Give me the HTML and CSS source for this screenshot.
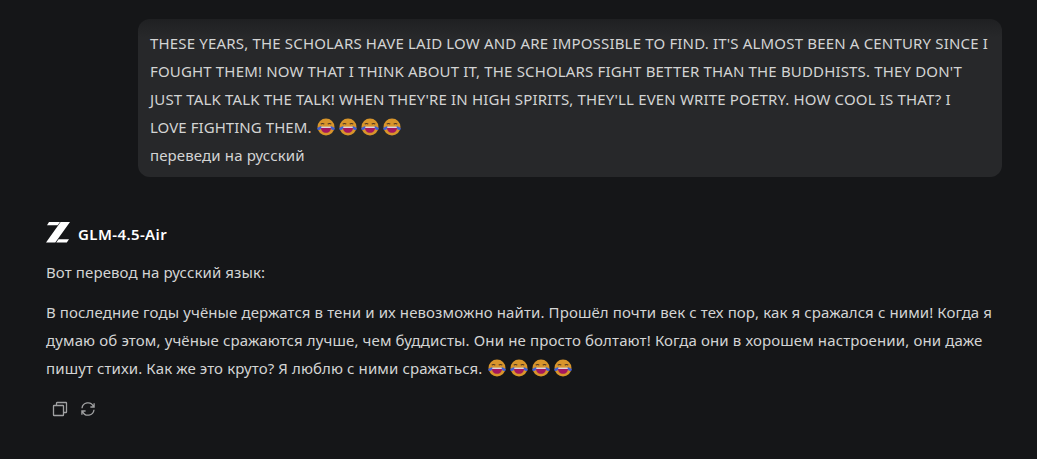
FILE: index.html
```
<!DOCTYPE html>
<html lang="ru">
<head>
	<meta charset="UTF-8">
	<meta name="viewport" content="width=device-width, initial-scale=1.0">
	<title>GLM-4.5-Air</title>
	<link rel="stylesheet" href="styles.css">
</head>
<body>

	<!-- Shared emoji drawing -->
	<svg class="defs" width="0" height="0">
		<symbol id="joy" viewBox="0 0 18 18">
			<circle cx="9" cy="9" r="8.5" fill="#d8952b"/>
			<path d="M3.700 6.200q1.800-1.500 3.600 0M10.700 6.200q1.800-1.500 3.600 0" fill="none" stroke="#4a3426" stroke-width="1.1"/>
			<path d="M4 8.900h10c.2 3.800-1.900 5.900-5 5.900s-5.200-2.100-5-5.900z" fill="#a3175f"/>
			<path d="M4 8.600h10v1.400H4z" fill="#dcd3dc"/>
			<path d="M4.300 8c.3 2.600-.9 4.100-2.400 4.100C.5 12.100-.1 11 .4 10.100.9 9.200 2.800 9 4.300 8zM13.700 8c-.3 2.600.9 4.100 2.400 4.100 1.400 0 2-1.100 1.500-2-.5-.9-2.400-1.100-3.900-2.100z" fill="#4360cf"/>
		</symbol>
	</svg>

	<div class="chat">
		<!-- User message -->
		<div class="user-message">
			<div class="line u1">THESE YEARS, THE SCHOLARS HAVE LAID LOW AND ARE IMPOSSIBLE TO FIND. IT'S ALMOST BEEN A CENTURY SINCE I</div>
			<div class="line u2">FOUGHT THEM! NOW THAT I THINK ABOUT IT, THE SCHOLARS FIGHT BETTER THAN THE BUDDHISTS. THEY DON'T</div>
			<div class="line u3">JUST TALK TALK THE TALK! WHEN THEY'RE IN HIGH SPIRITS, THEY'LL EVEN WRITE POETRY. HOW COOL IS THAT? I</div>
			<div class="line u4"><span>LOVE FIGHTING THEM.</span><span class="emojis"><svg><use href="#joy"/></svg><svg><use href="#joy"/></svg><svg><use href="#joy"/></svg><svg><use href="#joy"/></svg></span></div>
			<div class="line u5">переведи на русский</div>
		</div>

		<!-- Model answer -->
		<div class="answer">
			<div class="model">
				<svg class="logo" viewBox="0 0 24 21">
					<path d="M3 0h11l-2.400 3.300H1zM14.600 0H24L9.300 20.500H0zM12.600 17.200H23l-2.200 3.300H10.200z" fill="#fff"/>
				</svg>
				<span class="model-name">GLM-4.5-Air</span>
			</div>
			<div class="line a1">Вот перевод на русский язык:</div>
			<div class="paragraph">
				<div class="line a2">В последние годы учёные держатся в тени и их невозможно найти. Прошёл почти век с тех пор, как я сражался с ними! Когда я</div>
				<div class="line a3">думаю об этом, учёные сражаются лучше, чем буддисты. Они не просто болтают! Когда они в хорошем настроении, они даже</div>
				<div class="line a4"><span>пишут стихи. Как же это круто? Я люблю с ними сражаться.</span><span class="emojis"><svg><use href="#joy"/></svg><svg><use href="#joy"/></svg><svg><use href="#joy"/></svg><svg><use href="#joy"/></svg></span></div>
			</div>
			<div class="actions">
				<svg viewBox="0 0 16 16">
					<rect x="1.500" y="4.500" width="10" height="10" rx=".6"/>
					<path d="M4.500 4.500V2.100q0-.6.600-.6H13.900q.6 0 .6.600V10.900q0 .6-.6.600H11.500"/>
				</svg>
				<svg viewBox="0 0 16 16">
					<path d="M2 7.200A6 6 0 0 1 13.400 5.300M14.100 2.300v3.700h-3.700M14 8.800A6 6 0 0 1 2.600 10.700M1.900 13.700V10h3.700"/>
				</svg>
			</div>
		</div>
	</div>

</body>
</html>
```
FILE: styles.css
```
body {
	margin: 0;
	height: 459px;
	overflow: hidden;
	background-color: #151618;
	color: #d3d4d4;
	font-family: "Noto Sans", "Open Sans", sans-serif;
	font-size: 15px;
	line-height: 28px;
}

.defs {
	display: block;
}

.chat {
	display: flex;
	flex-direction: column;
	padding: 19px 35px 0 46px;
}

.user-message {
	box-sizing: border-box;
	align-self: flex-end;
	width: 864px;
	height: 158px;
	padding: 10px 12px 8px;
	border-radius: 12px;
	background: linear-gradient(#1f2022, #27282a 18px);
}

.line {
	display: flex;
	height: 28px;
	white-space: nowrap;
}

/* Per-line tracking */
.u1 {
	letter-spacing: 0.175px;
}

.u2,
.u3 {
	letter-spacing: 0.16px;
}

.u4 {
	letter-spacing: 0.06px;
}

.u5,
.a3 {
	letter-spacing: 0.13px;
}

.a1,
.a2,
.a4 {
	letter-spacing: 0.11px;
}

.emojis {
	display: flex;
	align-items: center;
	gap: 4px;
	margin-left: 6px;
}

.emojis svg {
	width: 18px;
	height: 18px;
}

.answer {
	margin-top: 43px;
}

.model {
	display: flex;
	align-items: center;
	gap: 8px;
	height: 28px;
	margin-bottom: 10px;
}

.logo {
	width: 24px;
	height: 21px;
	margin-top: -3px;
}

.model-name {
	color: #fff;
	font-weight: 600;
	letter-spacing: 0.4px;
}

.paragraph {
	margin-top: 12px;
}

.actions {
	display: flex;
	gap: 12px;
	margin: 19px 0 0 6px;
}

.actions svg {
	width: 16px;
	height: 16px;
	fill: none;
	stroke: #a0a1a2;
	stroke-width: 1.3;
}
```
